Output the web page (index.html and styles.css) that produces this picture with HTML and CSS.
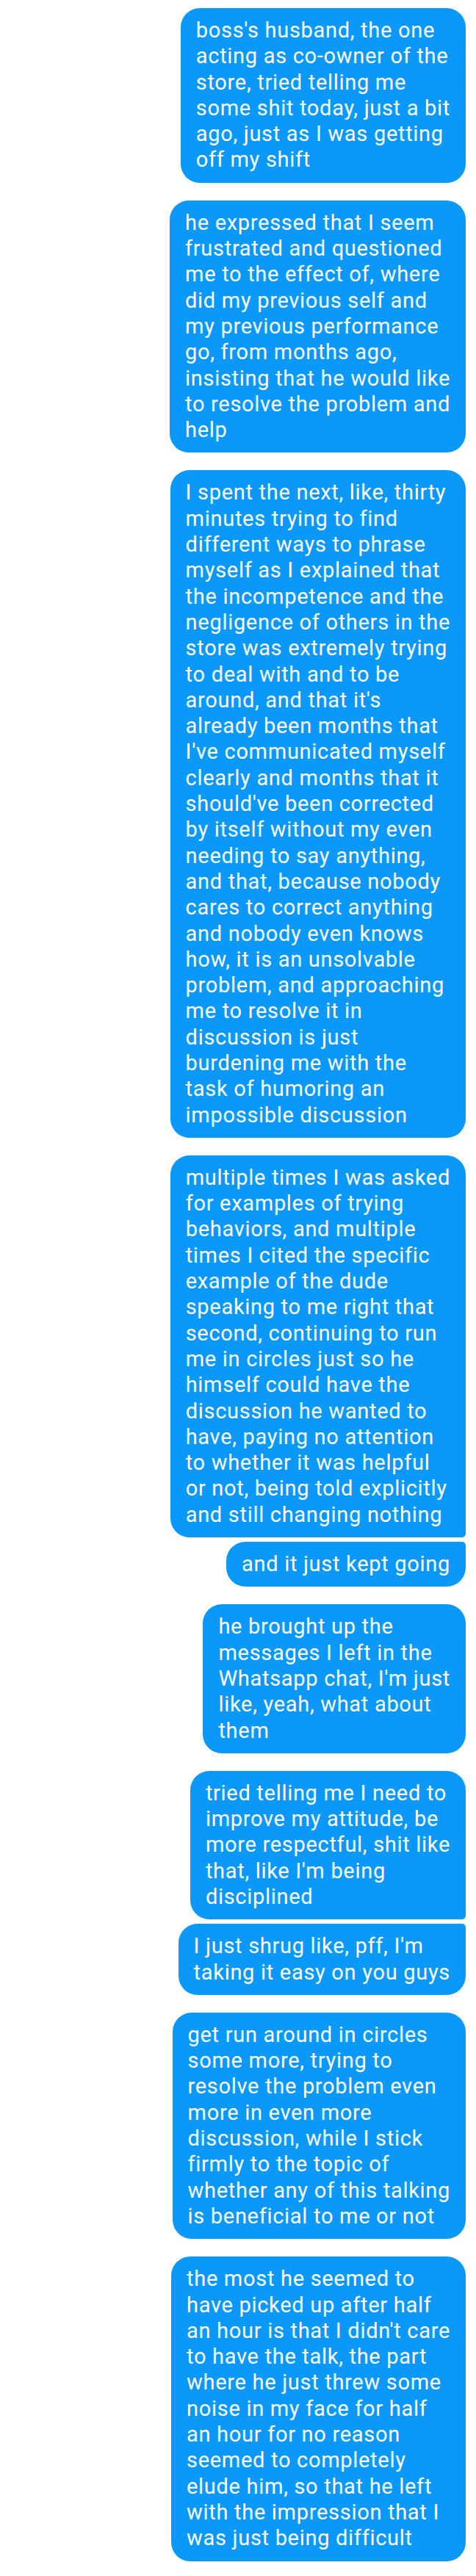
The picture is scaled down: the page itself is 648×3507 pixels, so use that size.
FILE: index.html
```html
<!DOCTYPE html>
<html lang="en">
<head>
<meta charset="utf-8">
<title>Messages</title>
<link rel="stylesheet" href="styles.css">
</head>
<body>
<main class="thread">
  <div class="bubble">boss's husband, the one<br>acting as co-owner of the<br>store, tried telling me<br>some shit today, just a bit<br>ago, just as I was getting<br>off my shift</div>
  <div class="bubble">he expressed that I seem<br>frustrated and questioned<br>me to the effect of, where<br>did my previous self and<br>my previous performance<br>go, from months ago,<br>insisting that he would like<br>to resolve the problem and<br>help</div>
  <div class="bubble">I spent the next, like, thirty<br>minutes trying to find<br>different ways to phrase<br>myself as I explained that<br>the incompetence and the<br>negligence of others in the<br>store was extremely trying<br>to deal with and to be<br>around, and that it's<br>already been months that<br>I've communicated myself<br>clearly and months that it<br>should've been corrected<br>by itself without my even<br>needing to say anything,<br>and that, because nobody<br>cares to correct anything<br>and nobody even knows<br>how, it is an unsolvable<br>problem, and approaching<br>me to resolve it in<br>discussion is just<br>burdening me with the<br>task of humoring an<br>impossible discussion</div>
  <div class="bubble group-first">multiple times I was asked<br>for examples of trying<br>behaviors, and multiple<br>times I cited the specific<br>example of the dude<br>speaking to me right that<br>second, continuing to run<br>me in circles just so he<br>himself could have the<br>discussion he wanted to<br>have, paying no attention<br>to whether it was helpful<br>or not, being told explicitly<br>and still changing nothing</div>
  <div class="bubble group-last">and it just kept going</div>
  <div class="bubble">he brought up the<br>messages I left in the<br>Whatsapp chat, I'm just<br>like, yeah, what about<br>them</div>
  <div class="bubble group-first">tried telling me I need to<br>improve my attitude, be<br>more respectful, shit like<br>that, like I'm being<br>disciplined</div>
  <div class="bubble group-last">I just shrug like, pff, I'm<br>taking it easy on you guys</div>
  <div class="bubble">get run around in circles<br>some more, trying to<br>resolve the problem even<br>more in even more<br>discussion, while I stick<br>firmly to the topic of<br>whether any of this talking<br>is beneficial to me or not</div>
  <div class="bubble">the most he seemed to<br>have picked up after half<br>an hour is that I didn't care<br>to have the talk, the part<br>where he just threw some<br>noise in my face for half<br>an hour for no reason<br>seemed to completely<br>elude him, so that he left<br>with the impression that I<br>was just being difficult</div>
</main>
</body>
</html>
```
FILE: styles.css
```css
html, body {
  margin: 0;
  padding: 0;
  background: #ffffff;
}

.thread {
  display: flex;
  flex-direction: column;
  align-items: flex-end;
  gap: 24px;
  padding: 11px 14px 19px;
  font-family: Roboto, "Noto Sans", sans-serif;
}

.bubble {
  background: #0a99fa;
  color: #ffffff;
  font-size: 29px;
  letter-spacing: 0.7px;
  line-height: 35.3px;
  padding: 13px 21px;
  border-radius: 26px;
  white-space: nowrap;
}

.group-first {
  border-bottom-right-radius: 5px;
}

.group-last {
  border-top-right-radius: 5px;
  margin-top: -18px;
}
```
